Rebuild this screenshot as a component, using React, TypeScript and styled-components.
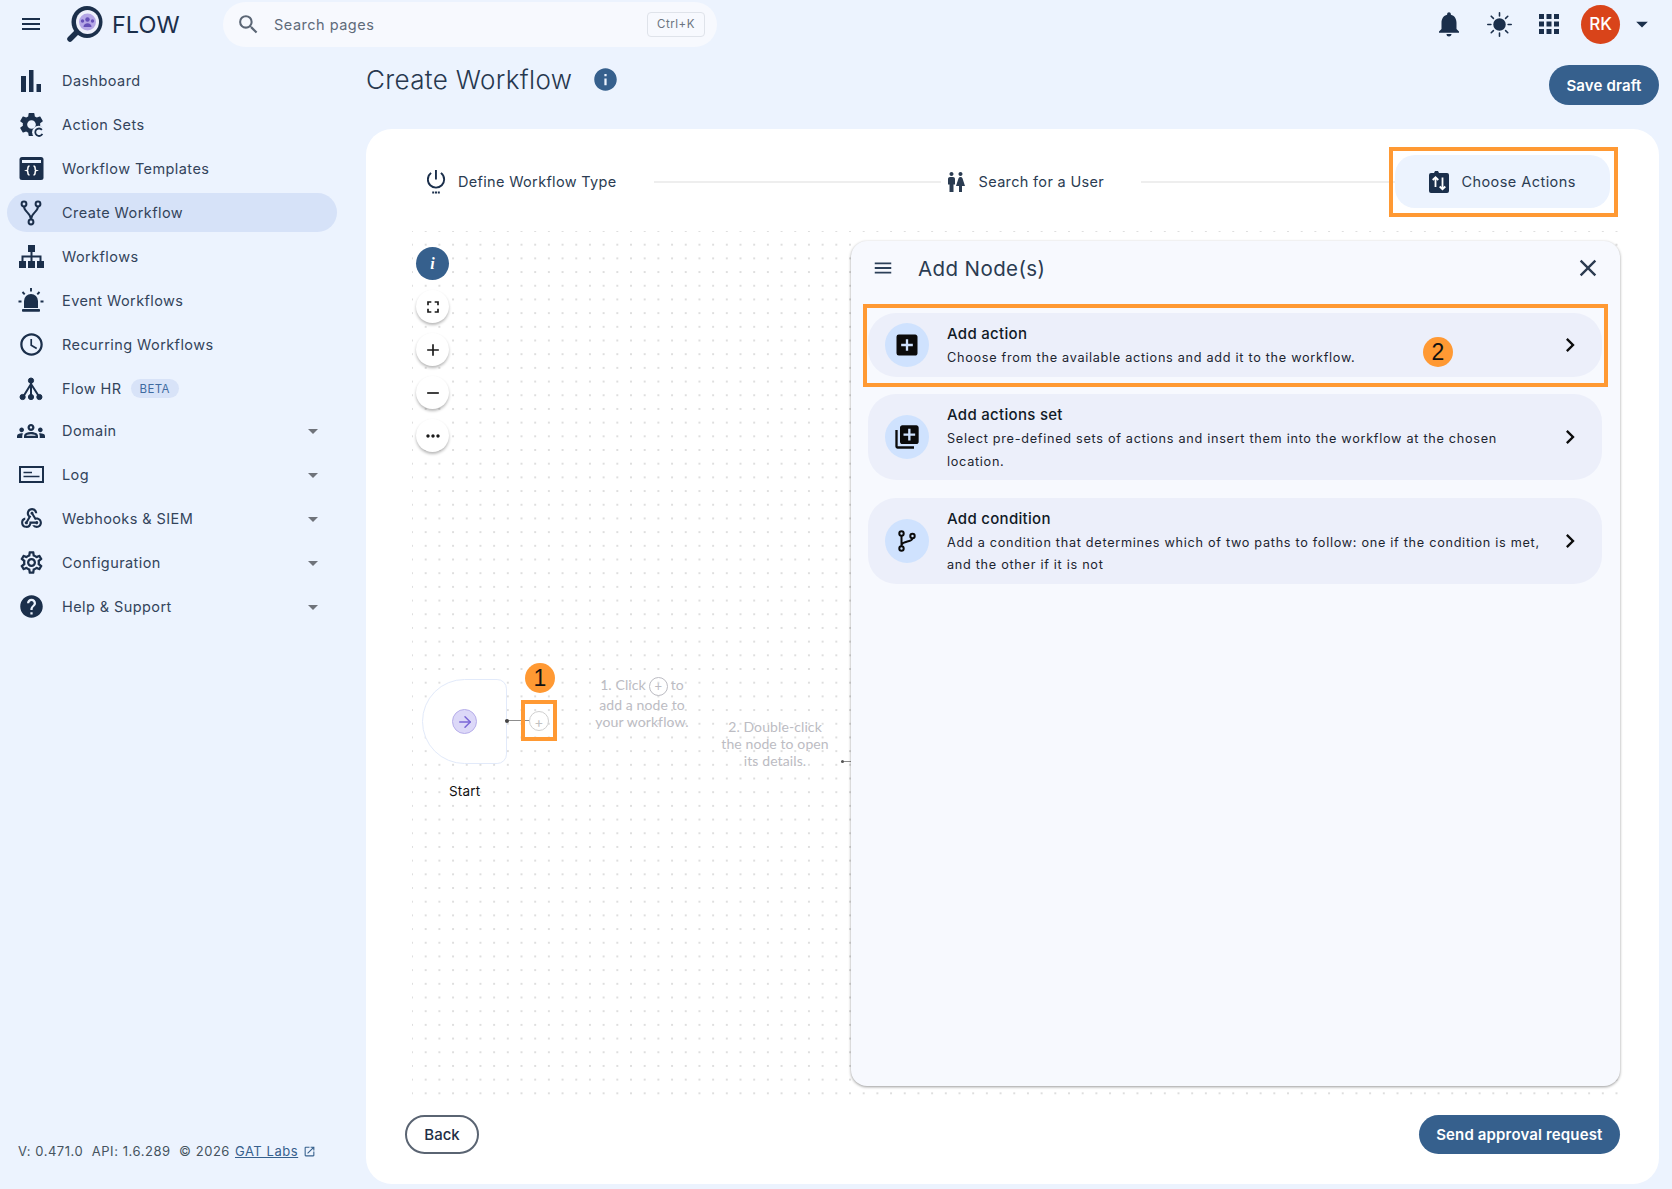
import React, { FC, ReactNode } from 'react';
import styled, { createGlobalStyle } from 'styled-components';
import {
  MdAdd,
  MdAddBox,
  MdApps,
  MdArrowDropDown,
  MdChevronRight,
  MdClose,
  MdFullscreen,
  MdHelp,
  MdInfo,
  MdLibraryAdd,
  MdMenu,
  MdMoreHoriz,
  MdNotifications,
  MdOpenInNew,
  MdOutlineAccessTime,
  MdOutlineGroups,
  MdOutlineSettings,
  MdRemove,
  MdSearch,
  MdWc,
  MdWebhook,
} from 'react-icons/md';
import { BsSunFill } from 'react-icons/bs';
import { LuArrowRight } from 'react-icons/lu';

const NAVY = '#1b2f4b';
const BLUE = '#36608d';
const ORANGE = '#ff9933';

const GlobalStyle = createGlobalStyle`
  html, body { margin: 0; padding: 0; }
  body {
    background: #ecf3fe;
    font-family: Inter, "Liberation Sans", sans-serif;
    color: ${NAVY};
  }
`;

const Shell = styled.div`
  width: 1672px;
  height: 1189px;
  display: flex;
  flex-direction: column;
  overflow: hidden;
`;

/* top bar */
const TopBar = styled.header`
  height: 48px;
  display: flex;
  align-items: center;
  flex-shrink: 0;
`;

const MenuButton = styled.div`
  width: 24px;
  margin-left: 19px;
  display: flex;
  color: ${NAVY};
  font-size: 26px;
`;

const Brand = styled.div`
  margin-left: 23px;
  width: 157px;
  display: flex;
  align-items: center;
  gap: 8px;
  font-size: 23.5px;
  color: ${NAVY};
`;

const SearchBox = styled.div`
  width: 494px;
  height: 45px;
  padding: 0 12px 0 13px;
  box-sizing: border-box;
  border-radius: 23px;
  background: #f7f9fe;
  display: flex;
  align-items: center;
  color: #5f6b7a;
  font-size: 14.5px;
  letter-spacing: 0.5px;
`;

const SearchIcon = styled(MdSearch)`
  font-size: 25px;
  margin-right: 13px;
  color: #5b6675;
`;

const Shortcut = styled.span`
  margin-left: auto;
  height: 25px;
  width: 58px;
  border: 1px solid #dfe3ea;
  border-radius: 4px;
  box-sizing: border-box;
  display: flex;
  align-items: center;
  justify-content: center;
  font-size: 11.5px;
  color: #6b7480;
`;

const TopActions = styled.div`
  margin-left: auto;
  display: flex;
  align-items: center;
  color: ${NAVY};
`;

const TopIcon = styled.span`
  width: 50px;
  display: flex;
  justify-content: center;
  font-size: 26px;
`;

const Avatar = styled.div`
  width: 39px;
  height: 39px;
  margin-left: 7px;
  border-radius: 50%;
  background: #d9441a;
  color: #fff;
  font-size: 17px;
  font-weight: 500;
  display: flex;
  align-items: center;
  justify-content: center;
`;

const AvatarCaret = styled(MdArrowDropDown)`
  font-size: 28px;
  margin: 0 16px 0 8px;
`;

/* layout */
const Body = styled.div`
  flex: 1;
  display: flex;
  min-height: 0;
`;

const Sidebar = styled.aside`
  width: 366px;
  flex-shrink: 0;
  display: flex;
  flex-direction: column;
  padding-top: 13px;
  box-sizing: border-box;
`;

const NavRow = styled.div<{ $active?: boolean; $tight?: boolean }>`
  height: 39px;
  width: 330px;
  margin: ${(p) => (p.$tight ? '-2px' : '0')} 0 5px 7px;
  padding: 0 12px;
  box-sizing: border-box;
  border-radius: 20px;
  display: flex;
  align-items: center;
  background: ${(p) => (p.$active ? '#d6e2f8' : 'transparent')};
  color: #33445b;
  font-size: 14.5px;
  letter-spacing: 0.42px;
`;

const NavIcon = styled.span`
  width: 24px;
  height: 24px;
  margin-right: 19px;
  display: flex;
  align-items: center;
  justify-content: center;
  color: ${NAVY};
  font-size: 24px;
  flex-shrink: 0;
  & > svg {
    flex-shrink: 0;
  }
`;

const Beta = styled.span`
  margin-left: 9px;
  padding: 0 9px;
  height: 19px;
  border-radius: 10px;
  background: #d8e3f8;
  color: #3f6ba0;
  font-size: 11.5px;
  letter-spacing: 0.4px;
  display: flex;
  align-items: center;
`;

const NavCaret = styled(MdArrowDropDown)`
  margin-left: auto;
  font-size: 24px;
  color: #6f737a;
`;

const Version = styled.footer`
  margin: auto 0 30px 18px;
  display: flex;
  align-items: center;
  font-size: 13px;
  letter-spacing: 0.55px;
  color: #46535f;
  white-space: pre;
`;

const VersionLink = styled.a`
  color: ${BLUE};
  text-decoration: underline;
  margin-left: 5px;
`;

const VersionIcon = styled(MdOpenInNew)`
  margin-left: 5px;
  font-size: 13px;
  color: ${BLUE};
`;

const Main = styled.main`
  flex: 1;
  min-width: 0;
  display: flex;
  flex-direction: column;
  padding: 0 13px 5px 0;
`;

const TitleRow = styled.div`
  height: 81px;
  flex-shrink: 0;
  display: flex;
  align-items: flex-start;
`;

const Title = styled.h1`
  margin: 15px 0 0;
  font-size: 26px;
  line-height: 34px;
  font-weight: 300;
  color: #27384f;
  letter-spacing: 0.35px;
`;

const TitleInfo = styled(MdInfo)`
  margin: 18px 0 0 20px;
  font-size: 27px;
  color: ${BLUE};
`;

const PrimaryButton = styled.button`
  height: 39px;
  padding: 0 17.5px;
  border: none;
  border-radius: 20px;
  background: ${BLUE};
  color: #fff;
  font: 600 15px Inter, "Liberation Sans", sans-serif;
  letter-spacing: 0.15px;
`;

const SaveDraft = styled(PrimaryButton)`
  margin: 17px 0 0 auto;
  width: 110px;
  height: 40px;
  padding: 0;
`;

const Card = styled.section`
  flex: 1;
  min-height: 0;
  background: #fff;
  border-radius: 26px;
  display: flex;
  flex-direction: column;
  padding: 18px 40px 30px 46px;
`;

/* stepper */
const Stepper = styled.div`
  height: 69px;
  flex-shrink: 0;
  display: flex;
  align-items: center;
  padding-left: 15px;
`;

const Step = styled.div`
  display: flex;
  align-items: center;
  gap: 11px;
  font-size: 14.5px;
  letter-spacing: 0.33px;
  color: #2b3c52;
  white-space: nowrap;
`;

const Connector = styled.div<{ $width: number; $after: number }>`
  width: ${(p) => p.$width}px;
  margin: 0 ${(p) => p.$after}px 0 37px;
  height: 2px;
  background: #eeeeee;
`;

const ActiveStep = styled(Step)`
  position: relative;
  width: 215px;
  height: 53px;
  box-sizing: border-box;
  justify-content: center;
  gap: 12px;
  border-radius: 20px;
  background: #ecf3fe;
  letter-spacing: 0.45px;
`;

const Highlight = styled.div<{ $inset: string }>`
  position: absolute;
  inset: ${(p) => p.$inset};
  border: 4px solid ${ORANGE};
  pointer-events: none;
`;

/* canvas */
const Canvas = styled.div`
  position: relative;
  flex: 1;
  min-height: 0;
  margin-top: 15px;
  background-image: radial-gradient(circle, #cfcfcf 0.6px, transparent 0.9px);
  background-size: 13.7px 13.7px;
  background-position: -6.85px -6.85px;
`;

const Controls = styled.div`
  position: absolute;
  left: 4px;
  top: 16px;
  display: flex;
  flex-direction: column;
  gap: 10px;
`;

const ControlButton = styled.div<{ $info?: boolean }>`
  width: 33px;
  height: 33px;
  border-radius: 50%;
  display: flex;
  align-items: center;
  justify-content: center;
  background: ${(p) => (p.$info ? BLUE : '#fff')};
  color: ${(p) => (p.$info ? '#fff' : '#1a1a1a')};
  box-shadow: ${(p) => (p.$info ? 'none' : '0 2px 3px rgba(0, 0, 0, 0.28)')};
  font: italic 700 16px "Liberation Serif", serif;
`;

const StartNode = styled.div`
  position: absolute;
  left: 10px;
  top: 448px;
  width: 85px;
  height: 85px;
  box-sizing: border-box;
  background: #fff;
  border: 1px solid #e2eafa;
  border-radius: 43px 10px 10px 43px;
  display: flex;
  align-items: center;
  justify-content: center;
`;

const StartIcon = styled.div`
  width: 23px;
  height: 23px;
  border-radius: 50%;
  background: #dcd8f8;
  border: 1px solid #b7aeea;
  color: #7a66d6;
  display: flex;
  align-items: center;
  justify-content: center;
  font-size: 18px;
`;

const StartLabel = styled.div`
  position: absolute;
  left: 37px;
  top: 552px;
  font-size: 13.5px;
  letter-spacing: 0.2px;
  color: #111;
`;

const NodeWire = styled.div`
  position: absolute;
  left: 93px;
  top: 489px;
  width: 26px;
  height: 1px;
  background: #8d8d8d;
  &::before {
    content: '';
    position: absolute;
    left: 0;
    top: -1.5px;
    width: 4px;
    height: 4px;
    border-radius: 50%;
    background: #444;
  }
`;

const AddHandle = styled.div`
  position: absolute;
  left: 117px;
  top: 480px;
  width: 20px;
  height: 20px;
  box-sizing: border-box;
  border: 1px solid #cfcfcf;
  border-radius: 50%;
  background: #fff;
  color: #c2c2c2;
  font-size: 14px;
  display: flex;
  align-items: center;
  justify-content: center;
`;

const AddHandleBox = styled.div`
  position: absolute;
  left: 109px;
  top: 469px;
  width: 36px;
  height: 41px;
  box-sizing: border-box;
  border: 4px solid ${ORANGE};
`;

const StepBadge = styled.div<{ $left: number; $top: number }>`
  position: absolute;
  left: ${(p) => p.$left}px;
  top: ${(p) => p.$top}px;
  width: 30px;
  height: 30px;
  border-radius: 50%;
  background: ${ORANGE};
  color: #111;
  font: 500 23px "Liberation Sans", sans-serif;
  display: flex;
  align-items: center;
  justify-content: center;
`;

const Hint = styled.div<{ $left: number; $top: number }>`
  position: absolute;
  left: ${(p) => p.$left}px;
  top: ${(p) => p.$top}px;
  width: 120px;
  text-align: center;
  font: 14px/17px Lato, "Liberation Sans", sans-serif;
  letter-spacing: 0.1px;
  color: #bcbcc3;
`;

const HintPlus = styled.span`
  display: inline-flex;
  width: 19px;
  height: 19px;
  margin: 0 3px;
  border: 1px solid #bcbcc3;
  border-radius: 50%;
  box-sizing: border-box;
  align-items: center;
  justify-content: center;
  vertical-align: middle;
  font-size: 13px;
`;

const HintArrow = styled.div`
  position: absolute;
  left: 429px;
  top: 530px;
  width: 10px;
  height: 1px;
  background: #8d8d8d;
  &::before {
    content: '';
    position: absolute;
    left: 0;
    top: -1px;
    width: 3px;
    height: 3px;
    border-radius: 50%;
    background: #555;
  }
`;

/* side panel */
const Panel = styled.aside`
  position: absolute;
  left: 439px;
  top: 10px;
  right: -1px;
  bottom: 9px;
  background: #f7f9fe;
  border-radius: 16px;
  box-shadow: 0 1px 3px rgba(0, 0, 0, 0.4);
  padding: 0 18px 0 17px;
  display: flex;
  flex-direction: column;
`;

const PanelHeader = styled.div`
  height: 72px;
  flex-shrink: 0;
  display: flex;
  align-items: center;
  padding-bottom: 18px;
  box-sizing: border-box;
`;

const PanelMenu = styled(MdMenu)`
  margin-left: 4px;
  font-size: 22px;
  color: #2c4058;
`;

const PanelTitle = styled.h2`
  margin: 0 0 0 24px;
  font-size: 20.5px;
  font-weight: 400;
  letter-spacing: 0.4px;
  color: #2b3c52;
`;

const PanelClose = styled(MdClose)`
  margin-left: auto;
  margin-right: 0;
  font-size: 28px;
  color: #2c3b50;
`;

const Options = styled.div`
  display: flex;
  flex-direction: column;
  gap: 17.5px;
`;

const Option = styled.div`
  position: relative;
  display: flex;
  align-items: center;
  padding: 7px 18px 7px 17px;
  border-radius: 28px;
  background: #eceffa;
`;

const OptionIcon = styled.div`
  width: 44px;
  height: 44px;
  margin-right: 18px;
  flex-shrink: 0;
  border-radius: 50%;
  background: #cfe2fe;
  color: #0b0b0b;
  font-size: 25px;
  display: flex;
  align-items: center;
  justify-content: center;
`;

const OptionText = styled.div`
  width: 600px;
  padding-top: 3px;
`;

const OptionTitle = styled.div`
  font-size: 15px;
  line-height: 21px;
  font-weight: 500;
  letter-spacing: 0.3px;
  color: #111a26;
  margin-bottom: 3px;
`;

const OptionDescription = styled.div`
  font-size: 12.7px;
  line-height: 22.5px;
  letter-spacing: 0.7px;
  color: #1c2530;
`;

const OptionChevron = styled(MdChevronRight)`
  margin-left: auto;
  font-size: 28px;
  color: #0c0c0c;
`;

/* footer */
const CardFooter = styled.div`
  flex-shrink: 0;
  margin: 20px -1px 0 -7px;
  display: flex;
  align-items: center;
  justify-content: space-between;
`;

const BackButton = styled.button`
  width: 74px;
  height: 39px;
  border: 2px solid #5a6472;
  border-radius: 20px;
  background: #fff;
  color: #1f2f45;
  font: 500 15px Inter, "Liberation Sans", sans-serif;
`;

/* drawn icons */
const LogoMark: FC = () => (
  <svg width="38" height="38" viewBox="0 0 38 38">
    <path d="M11 27 L4 34" stroke={NAVY} strokeWidth="5.5" strokeLinecap="round" />
    <ellipse cx="21" cy="17" rx="15.5" ry="16" fill={NAVY} />
    <ellipse cx="21.5" cy="17" rx="11.5" ry="12" fill="#eef0fb" />
    <circle cx="21.5" cy="17" r="8.5" fill="#b5a7e6" />
    <circle cx="21.5" cy="14.5" r="2.2" fill="#6650b8" />
    <circle cx="16.5" cy="16" r="1.7" fill="#6650b8" />
    <circle cx="26.5" cy="16" r="1.7" fill="#6650b8" />
    <path d="M17.5 22c0-5 8-5 8 0z" fill="#6650b8" />
  </svg>
);

const BarsIcon: FC = () => (
  <svg width="20" height="22" viewBox="0 0 20 22" fill={NAVY}>
    <rect x="0" y="6" width="5" height="16" />
    <rect x="8" y="0" width="4.5" height="22" />
    <rect x="15.5" y="14" width="4.5" height="8" />
  </svg>
);

const GearRefreshIcon: FC = () => (
  <svg width="29" height="29" viewBox="0 0 24 24" fill={NAVY}>
    <path d="M19.14 12.94c.04-.3.06-.61.06-.94 0-.32-.02-.64-.07-.94l2.03-1.58c.18-.14.23-.41.12-.61l-1.92-3.32c-.12-.22-.37-.29-.59-.22l-2.39.96c-.5-.38-1.03-.7-1.62-.94l-.36-2.54c-.04-.24-.24-.41-.48-.41h-3.84c-.24 0-.43.17-.47.41l-.36 2.54c-.59.24-1.13.57-1.62.94l-2.39-.96c-.22-.08-.47 0-.59.22L2.74 8.87c-.12.21-.08.47.12.61l2.03 1.58c-.05.3-.09.63-.09.94s.02.64.07.94l-2.03 1.58c-.18.14-.23.41-.12.61l1.92 3.32c.12.22.37.29.59.22l2.39-.96c.5.38 1.03.7 1.62.94l.36 2.54c.05.24.24.41.48.41h3.84c.24 0 .44-.17.47-.41l.36-2.54c.59-.24 1.13-.56 1.62-.94l2.39.96c.22.08.47 0 .59-.22l1.92-3.32c.12-.22.07-.47-.12-.61l-2.01-1.58zM12 15.6c-1.98 0-3.6-1.62-3.6-3.6s1.62-3.6 3.6-3.6 3.6 1.62 3.6 3.6-1.62 3.6-3.6 3.6z" />
    <circle cx="18" cy="18.5" r="5.5" fill="#ecf3fe" />
    <path d="M20.6 16.4a3.1 3.1 0 1 0 .4 3.4" fill="none" stroke={NAVY} strokeWidth="1.5" />
  </svg>
);

const TemplateIcon: FC = () => (
  <svg width="25" height="25" viewBox="0 0 25 25" fill="none">
    <rect x="0.5" y="1" width="24" height="23" rx="2.5" fill={NAVY} />
    <rect x="3" y="4" width="19" height="3" fill="#ecf3fe" />
    <path
      d="M10.5 10c-2 0-1.5 2.2-1.8 3.7-.2.6-.9.8-.9.8s.7.2.9.8c.3 1.5-.2 3.7 1.8 3.7M14.5 10c2 0 1.5 2.2 1.8 3.7.2.6.9.8.9.8s-.7.2-.9.8c-.3 1.5.2 3.7-1.8 3.7"
      stroke="#fff"
      strokeWidth="1.5"
    />
  </svg>
);

const ForkIcon: FC = () => (
  <svg width="24" height="26" viewBox="0 0 24 26" fill="none" stroke={NAVY} strokeWidth="2">
    <circle cx="5" cy="4" r="2.4" />
    <circle cx="19" cy="4" r="2.4" />
    <circle cx="12" cy="22" r="2.4" />
    <path d="M5 6.5C5 12 12 13 12 19.5M19 6.5C19 12 12 13 12 19.5" />
  </svg>
);

const SitemapIcon: FC = () => (
  <svg width="25" height="23" viewBox="0 0 25 23" fill={NAVY}>
    <rect x="9" y="0" width="7" height="7" />
    <rect x="0" y="16" width="7" height="7" />
    <rect x="9" y="16" width="7" height="7" />
    <rect x="18" y="16" width="7" height="7" />
    <path d="M12.5 7v9M3.5 16v-4.5h18V16" fill="none" stroke={NAVY} strokeWidth="2" />
  </svg>
);

const SirenIcon: FC = () => (
  <svg width="26" height="26" viewBox="0 0 26 26" fill={NAVY}>
    <path d="M6 20v-7a7 7 0 0 1 14 0v7z" />
    <rect x="4" y="21" width="18" height="2.8" rx="0.8" />
    <path d="M13 0v3.5M4.5 4l2.2 2.4M21.5 4l-2.2 2.4M0.5 13.5h3M22.5 13.5h3" stroke={NAVY} strokeWidth="1.9" />
  </svg>
);

const TreeIcon: FC = () => (
  <svg width="24" height="24" viewBox="0 0 24 24" fill={NAVY} stroke={NAVY}>
    <circle cx="12" cy="3.6" r="2.6" />
    <circle cx="3.6" cy="20" r="2.6" />
    <circle cx="12" cy="20" r="2.6" />
    <circle cx="20.4" cy="20" r="2.6" />
    <path d="M12 4v16M12 7L4 20M12 7l8.4 13" fill="none" strokeWidth="2" />
  </svg>
);

const LogIcon: FC = () => (
  <svg width="25" height="17" viewBox="0 0 25 17" fill="none">
    <rect x="1" y="1" width="23" height="15" stroke={NAVY} strokeWidth="2" />
    <path d="M4.5 6.5h8.5M4.5 10.5h16" stroke={NAVY} strokeWidth="1.6" />
  </svg>
);

const PowerIcon: FC = () => (
  <svg width="20" height="24" viewBox="1 0 20 24" fill={NAVY}>
    <path d="M10.9 0H9v9.5h1.9zM15.6 2.2l-1.3 1.4A7.6 7.6 0 0 1 17.2 9.5a7.2 7.2 0 1 1-14.4 0A7.6 7.6 0 0 1 5.7 3.6L4.4 2.2A9.2 9.2 0 0 0 .9 9.5a9.1 9.1 0 1 0 18.2 0 9.2 9.2 0 0 0-3.5-7.3z" />
    <rect x="6.2" y="21.5" width="2" height="2" />
    <rect x="9" y="21.5" width="2" height="2" />
    <rect x="11.8" y="21.5" width="2" height="2" />
  </svg>
);

const ChooseActionsIcon: FC = () => (
  <svg width="20" height="22" viewBox="0 0 20 22">
    <path d="M2 2h3l1-2h3l1 2h8a2 2 0 0 1 2 2v16a2 2 0 0 1-2 2H2a2 2 0 0 1-2-2V4a2 2 0 0 1 2-2z" fill={NAVY} />
    <path
      d="M6.5 16V6.5M3.7 9 6.5 6.2 9.3 9M13.5 6.5V18M10.7 15.5l2.8 2.8 2.8-2.8"
      fill="none"
      stroke="#fff"
      strokeWidth="1.8"
    />
  </svg>
);

const BranchIcon: FC = () => (
  <svg width="18" height="22" viewBox="0 0 18 22" fill="none" stroke="#0b0b0b" strokeWidth="2">
    <circle cx="3.5" cy="3.5" r="2.2" />
    <circle cx="3.5" cy="18.5" r="2.2" />
    <circle cx="14.5" cy="6" r="2.2" />
    <path d="M3.5 5.7v10.6M14.5 8.2C14.5 12.5 3.5 10.5 3.5 15.5" />
  </svg>
);

interface INavItem {
  label: string;
  icon: ReactNode;
  active?: boolean;
  beta?: boolean;
  group?: boolean;
  tight?: boolean;
}

const navItems: INavItem[] = [
  { label: 'Dashboard', icon: <BarsIcon /> },
  { label: 'Action Sets', icon: <GearRefreshIcon /> },
  { label: 'Workflow Templates', icon: <TemplateIcon /> },
  { label: 'Create Workflow', icon: <ForkIcon />, active: true },
  { label: 'Workflows', icon: <SitemapIcon /> },
  { label: 'Event Workflows', icon: <SirenIcon /> },
  { label: 'Recurring Workflows', icon: <MdOutlineAccessTime size={27} /> },
  { label: 'Flow HR', icon: <TreeIcon />, beta: true },
  { label: 'Domain', icon: <MdOutlineGroups size={28} />, group: true, tight: true },
  { label: 'Log', icon: <LogIcon />, group: true },
  { label: 'Webhooks & SIEM', icon: <MdWebhook size={25} />, group: true },
  { label: 'Configuration', icon: <MdOutlineSettings size={27} />, group: true },
  { label: 'Help & Support', icon: <MdHelp size={27} />, group: true },
];

interface IOption {
  title: string;
  description: string;
  icon: ReactNode;
  highlighted?: boolean;
}

const options: IOption[] = [
  {
    title: 'Add action',
    description: 'Choose from the available actions and add it to the workflow.',
    icon: <MdAddBox size={28} />,
    highlighted: true,
  },
  {
    title: 'Add actions set',
    description:
      'Select pre-defined sets of actions and insert them into the workflow at the chosen location.',
    icon: <MdLibraryAdd size={28} />,
  },
  {
    title: 'Add condition',
    description:
      'Add a condition that determines which of two paths to follow: one if the condition is met, and the other if it is not',
    icon: <BranchIcon />,
  },
];

const App: FC = () => (
  <Shell>
    <GlobalStyle />
    <TopBar>
      <MenuButton>
        <MdMenu />
      </MenuButton>
      <Brand>
        <LogoMark />
        FLOW
      </Brand>
      <SearchBox>
        <SearchIcon />
        Search pages
        <Shortcut>Ctrl+K</Shortcut>
      </SearchBox>
      <TopActions>
        <TopIcon>
          <MdNotifications size={30} />
        </TopIcon>
        <TopIcon>
          <BsSunFill size={25} />
        </TopIcon>
        <TopIcon>
          <MdApps size={30} />
        </TopIcon>
        <Avatar>RK</Avatar>
        <AvatarCaret />
      </TopActions>
    </TopBar>
    <Body>
      <Sidebar>
        {navItems.map((item) => (
          <NavRow key={item.label} $active={item.active} $tight={item.tight}>
            <NavIcon>{item.icon}</NavIcon>
            {item.label}
            {item.beta && <Beta>BETA</Beta>}
            {item.group && <NavCaret />}
          </NavRow>
        ))}
        <Version>
          {'V: 0.471.0  API: 1.6.289  © 2026'}
          <VersionLink>GAT Labs</VersionLink>
          <VersionIcon />
        </Version>
      </Sidebar>
      <Main>
        <TitleRow>
          <Title>Create Workflow</Title>
          <TitleInfo />
          <SaveDraft>Save draft</SaveDraft>
        </TitleRow>
        <Card>
          <Stepper>
            <Step>
              <PowerIcon />
              Define Workflow Type
            </Step>
            <Connector $width={287} $after={3} />
            <Step>
              <MdWc size={24} />
              Search for a User
            </Step>
            <Connector $width={254} $after={0} />
            <ActiveStep>
              <ChooseActionsIcon />
              Choose Actions
              <Highlight $inset="-8px -8px -9px -6px" />
            </ActiveStep>
          </Stepper>
          <Canvas>
            <Controls>
              <ControlButton $info>i</ControlButton>
              <ControlButton>
                <MdFullscreen size={20} />
              </ControlButton>
              <ControlButton>
                <MdAdd size={20} />
              </ControlButton>
              <ControlButton>
                <MdRemove size={20} />
              </ControlButton>
              <ControlButton>
                <MdMoreHoriz size={20} />
              </ControlButton>
            </Controls>
            <StartNode>
              <StartIcon>
                <LuArrowRight />
              </StartIcon>
            </StartNode>
            <StartLabel>Start</StartLabel>
            <NodeWire />
            <AddHandle>+</AddHandle>
            <AddHandleBox />
            <StepBadge $left={113} $top={432}>
              1
            </StepBadge>
            <Hint $left={170} $top={445}>
              1. Click<HintPlus>+</HintPlus>to
              <br />
              add a node to
              <br />
              your workflow.
            </Hint>
            <Hint $left={303} $top={487}>
              2. Double-click
              <br />
              the node to open
              <br />
              its details.
            </Hint>
            <HintArrow />
            <Panel>
              <PanelHeader>
                <PanelMenu />
                <PanelTitle>Add Node(s)</PanelTitle>
                <PanelClose />
              </PanelHeader>
              <Options>
                {options.map((option) => (
                  <Option key={option.title}>
                    <OptionIcon>{option.icon}</OptionIcon>
                    <OptionText>
                      <OptionTitle>{option.title}</OptionTitle>
                      <OptionDescription>{option.description}</OptionDescription>
                    </OptionText>
                    <OptionChevron />
                    {option.highlighted && (
                      <>
                        <Highlight $inset="-9px -6px -10px -5px" />
                        <StepBadge $left={555} $top={24}>
                          2
                        </StepBadge>
                      </>
                    )}
                  </Option>
                ))}
              </Options>
            </Panel>
          </Canvas>
          <CardFooter>
            <BackButton>Back</BackButton>
            <PrimaryButton>Send approval request</PrimaryButton>
          </CardFooter>
        </Card>
      </Main>
    </Body>
  </Shell>
);

export default App;
